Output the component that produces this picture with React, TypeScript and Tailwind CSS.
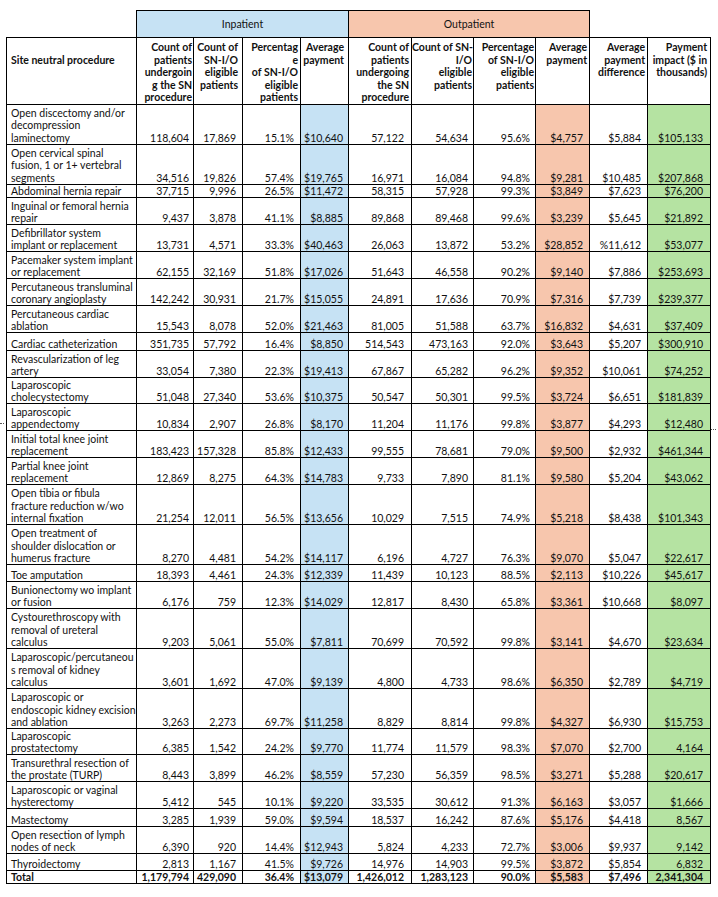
import React from 'react';
import { clsx } from 'clsx';

type Row = { name: string[]; v: string[]; h?: string };

const ROWS: Row[] = [
  { name: ['Open discectomy and/or', 'decompression', 'laminectomy'], v: ['118,604', '17,869', '15.1%', '$10,640', '57,122', '54,634', '95.6%', '$4,757', '$5,884', '$105,133'], h: 'h-[40px]' },
  { name: ['Open cervical spinal', 'fusion, 1 or 1+ vertebral', 'segments'], v: ['34,516', '19,826', '57.4%', '$19,765', '16,971', '16,084', '94.8%', '$9,281', '$10,485', '$207,868'], h: 'h-[40px]' },
  { name: ['Abdominal hernia repair'], v: ['37,715', '9,996', '26.5%', '$11,472', '58,315', '57,928', '99.3%', '$3,849', '$7,623', '$76,200'], h: 'h-[13px]' },
  { name: ['Inguinal or femoral hernia', 'repair'], v: ['9,437', '3,878', '41.1%', '$8,885', '89,868', '89,468', '99.6%', '$3,239', '$5,645', '$21,892'] },
  { name: ['Defibrillator system', 'implant or replacement'], v: ['13,731', '4,571', '33.3%', '$40,463', '26,063', '13,872', '53.2%', '$28,852', '%11,612', '$53,077'] },
  { name: ['Pacemaker system implant', 'or replacement'], v: ['62,155', '32,169', '51.8%', '$17,026', '51,643', '46,558', '90.2%', '$9,140', '$7,886', '$253,693'] },
  { name: ['Percutaneous transluminal', 'coronary angioplasty'], v: ['142,242', '30,931', '21.7%', '$15,055', '24,891', '17,636', '70.9%', '$7,316', '$7,739', '$239,377'] },
  { name: ['Percutaneous cardiac', 'ablation'], v: ['15,543', '8,078', '52.0%', '$21,463', '81,005', '51,588', '63.7%', '$16,832', '$4,631', '$37,409'] },
  { name: ['Cardiac catheterization'], v: ['351,735', '57,792', '16.4%', '$8,850', '514,543', '473,163', '92.0%', '$3,643', '$5,207', '$300,910'], h: 'h-[18px]' },
  { name: ['Revascularization of leg', 'artery'], v: ['33,054', '7,380', '22.3%', '$19,413', '67,867', '65,282', '96.2%', '$9,352', '$10,061', '$74,252'] },
  { name: ['Laparoscopic', 'cholecystectomy'], v: ['51,048', '27,340', '53.6%', '$10,375', '50,547', '50,301', '99.5%', '$3,724', '$6,651', '$181,839'], h: 'h-[26px]' },
  { name: ['Laparoscopic', 'appendectomy'], v: ['10,834', '2,907', '26.8%', '$8,170', '11,204', '11,176', '99.8%', '$3,877', '$4,293', '$12,480'] },
  { name: ['Initial total knee joint', 'replacement'], v: ['183,423', '157,328', '85.8%', '$12,433', '99,555', '78,681', '79.0%', '$9,500', '$2,932', '$461,344'] },
  { name: ['Partial knee joint', 'replacement'], v: ['12,869', '8,275', '64.3%', '$14,783', '9,733', '7,890', '81.1%', '$9,580', '$5,204', '$43,062'] },
  { name: ['Open tibia or fibula', 'fracture reduction w/wo', 'internal fixation'], v: ['21,254', '12,011', '56.5%', '$13,656', '10,029', '7,515', '74.9%', '$5,218', '$8,438', '$101,343'], h: 'h-[40px]' },
  { name: ['Open treatment of', 'shoulder dislocation or', 'humerus fracture'], v: ['8,270', '4,481', '54.2%', '$14,117', '6,196', '4,727', '76.3%', '$9,070', '$5,047', '$22,617'], h: 'h-[40px]' },
  { name: ['Toe amputation'], v: ['18,393', '4,461', '24.3%', '$12,339', '11,439', '10,123', '88.5%', '$2,113', '$10,226', '$45,617'], h: 'h-[17px]' },
  { name: ['Bunionectomy wo implant', 'or fusion'], v: ['6,176', '759', '12.3%', '$14,029', '12,817', '8,430', '65.8%', '$3,361', '$10,668', '$8,097'] },
  { name: ['Cystourethroscopy with', 'removal of ureteral', 'calculus'], v: ['9,203', '5,061', '55.0%', '$7,811', '70,699', '70,592', '99.8%', '$3,141', '$4,670', '$23,634'], h: 'h-[40px]' },
  { name: ['Laparoscopic/percutaneou', 's removal of kidney', 'calculus'], v: ['3,601', '1,692', '47.0%', '$9,139', '4,800', '4,733', '98.6%', '$6,350', '$2,789', '$4,719'], h: 'h-[40px]' },
  { name: ['Laparoscopic or', 'endoscopic kidney excision', 'and ablation'], v: ['3,263', '2,273', '69.7%', '$11,258', '8,829', '8,814', '99.8%', '$4,327', '$6,930', '$15,753'], h: 'h-[40px]' },
  { name: ['Laparoscopic', 'prostatectomy'], v: ['6,385', '1,542', '24.2%', '$9,770', '11,774', '11,579', '98.3%', '$7,070', '$2,700', '4,164'], h: 'h-[26px]' },
  { name: ['Transurethral resection of', 'the prostate (TURP)'], v: ['8,443', '3,899', '46.2%', '$8,559', '57,230', '56,359', '98.5%', '$3,271', '$5,288', '$20,617'] },
  { name: ['Laparoscopic or vaginal', 'hysterectomy'], v: ['5,412', '545', '10.1%', '$9,220', '33,535', '30,612', '91.3%', '$6,163', '$3,057', '$1,666'] },
  { name: ['Mastectomy'], v: ['3,285', '1,939', '59.0%', '$9,594', '18,537', '16,242', '87.6%', '$5,176', '$4,418', '8,567'], h: 'h-[18px]' },
  { name: ['Open resection of lymph', 'nodes of neck'], v: ['6,390', '920', '14.4%', '$12,943', '5,824', '4,233', '72.7%', '$3,006', '$9,937', '9,142'] },
  { name: ['Thyroidectomy'], v: ['2,813', '1,167', '41.5%', '$9,726', '14,976', '14,903', '99.5%', '$3,872', '$5,854', '6,832'], h: 'h-[17px]' },
];

const TOTAL = ['1,179,794', '429,090', '36.4%', '$13,079', '1,426,012', '1,283,123', '90.0%', '$5,583', '$7,496', '2,341,304'];

const HEADERS: string[][] = [
  ['Count of', 'patients', 'undergoin', 'g the SN', 'procedure'],
  ['Count of', 'SN-I/O', 'eligible', 'patients'],
  ['Percentag', 'e', 'of SN-I/O', 'eligible', 'patients'],
  ['Average', 'payment'],
  ['Count of', 'patients', 'undergoing', 'the SN', 'procedure'],
  ['Count of SN-', 'I/O', 'eligible', 'patients'],
  ['Percentage', 'of SN-I/O', 'eligible', 'patients'],
  ['Average', 'payment'],
  ['Average', 'payment', 'difference'],
  ['Payment', 'impact ($ in', 'thousands)'],
];

const COL_W = ['w-[130px]', 'w-[57px]', 'w-[49px]', 'w-[58px]', 'w-[48px]', 'w-[63px]', 'w-[62px]', 'w-[62px]', 'w-[54px]', 'w-[58px]', 'w-[63px]'];
const HEAD_PAD = ['pr-[1px]', 'pr-[4px]', 'pr-[2px]', 'pr-[4px]', 'pr-[2px]', 'pr-[1px]', 'pr-[1px]', 'pr-[2px]', 'pr-[2px]', 'pr-[3px]'];
const CELL_PAD = ['pr-[4px]', 'pr-[6px]', 'pr-[6px]', 'pr-[5px]', 'pr-[7px]', 'pr-[5px]', 'pr-[5px]', 'pr-[6px]', 'pr-[6px]', 'pr-[7px]'];
const CELL_BG = ['', '', '', 'bg-[#c6e2f4]', '', '', '', 'bg-[#f7c6ad]', '', 'bg-[#b5e3a2]'];

const Lines = ({ lines }: { lines: string[] }) => (
  <>
    {lines.map((l, i) => (
      <React.Fragment key={i}>
        {i > 0 && <br />}
        {l}
      </React.Fragment>
    ))}
  </>
);

export default function App() {
  return (
    <div
      className="relative min-h-[897px] w-[718px] bg-white pl-[6px] pt-[10px] text-[10.5px] leading-[12px] text-[#111]"
      style={{ fontFamily: 'Lato, "Open Sans", sans-serif' }}
    >
      <table className="w-[705px] table-fixed border-collapse">
        <colgroup>
          {COL_W.map((w, i) => (
            <col key={i} className={w} />
          ))}
        </colgroup>
        <thead>
          <tr className="h-[27px]">
            <th />
            <th colSpan={4} className="border border-black bg-[#c6e2f4] text-center font-normal">
              Inpatient
            </th>
            <th colSpan={4} className="border border-black bg-[#f7c6ad] text-center font-normal">
              Outpatient
            </th>
            <th colSpan={2} />
          </tr>
          <tr className="h-[66px]">
            <th className="border border-black pl-[4px] pt-[16px] text-left align-top font-bold">Site neutral procedure</th>
            {HEADERS.map((h, i) => (
              <th key={i} className={clsx('border border-black pt-[3px] text-right align-top font-bold leading-[12.6px] whitespace-nowrap', HEAD_PAD[i])}>
                <Lines lines={h} />
              </th>
            ))}
          </tr>
        </thead>
        <tbody className="leading-[12.4px]">
          {ROWS.map((r, ri) => (
            <tr key={ri} className={r.h ?? 'h-[27px]'}>
              <td className="border border-black pl-[4px] align-bottom whitespace-nowrap">
                <Lines lines={r.name} />
              </td>
              {r.v.map((v, ci) => (
                <td key={ci} className={clsx('border border-black text-right align-bottom whitespace-nowrap', CELL_PAD[ci], CELL_BG[ci])}>
                  {v}
                </td>
              ))}
            </tr>
          ))}
          <tr className="h-[13px] font-bold leading-[12px]">
            <td className="border border-black pl-[4px] align-bottom">Total</td>
            {TOTAL.map((v, ci) => (
              <td key={ci} className={clsx('border border-black text-right align-bottom whitespace-nowrap', CELL_PAD[ci], CELL_BG[ci])}>
                {v}
              </td>
            ))}
          </tr>
        </tbody>
      </table>

      {/* stray selection dots from the source sheet */}
      <span className="absolute left-0 top-[423px] w-[4px] border-t border-dotted border-[#555]" />
      <span className="absolute left-[711px] top-[429px] w-[5px] border-t border-dotted border-[#555]" />
    </div>
  );
}
